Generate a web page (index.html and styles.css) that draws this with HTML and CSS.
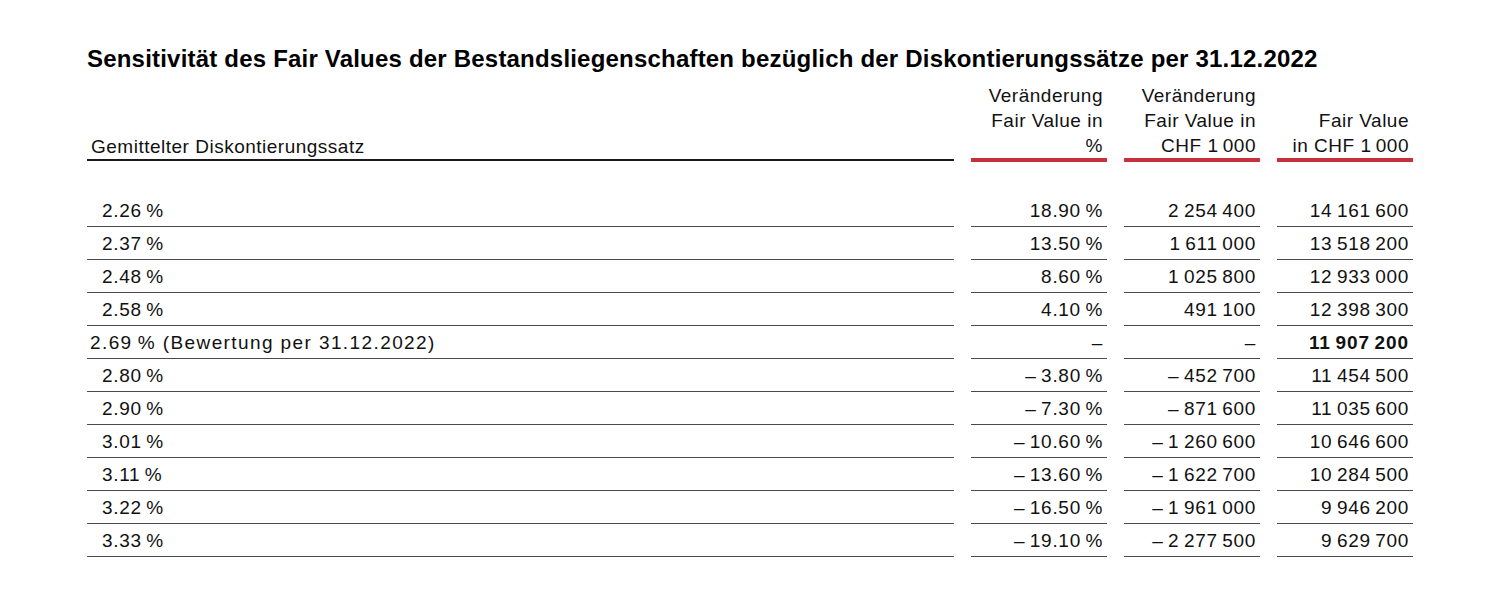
FILE: index.html
```html
<!DOCTYPE html>
<html lang="de">
<head>
<meta charset="utf-8">
<title>Sensitivität</title>
<link rel="stylesheet" href="styles.css">
</head>
<body>
<div class="page">
  <h1 class="title">Sensitivität des Fair Values der Bestandsliegenschaften bezüglich der Diskontierungssätze per 31.12.2022</h1>
  <div class="table">
    <div class="hcell hfirst">Gemittelter Diskontierungssatz</div>
    <div class="hcell hnum"><span>Veränderung<br>Fair Value in<br>%</span></div>
    <div class="hcell hnum"><span>Veränderung<br>Fair Value in<br>CHF 1&#8201;000</span></div>
    <div class="hcell hnum"><span>Fair Value<br>in CHF 1&#8201;000</span></div>

    <div class="spacer"></div><div class="spacer"></div><div class="spacer"></div><div class="spacer"></div>

    <div class="cell label">2.26&#8201;%</div><div class="cell num">18.90&#8201;%</div><div class="cell num">2&#8201;254&#8201;400</div><div class="cell num">14&#8201;161&#8201;600</div>
    <div class="cell label">2.37&#8201;%</div><div class="cell num">13.50&#8201;%</div><div class="cell num">1&#8201;611&#8201;000</div><div class="cell num">13&#8201;518&#8201;200</div>
    <div class="cell label">2.48&#8201;%</div><div class="cell num">8.60&#8201;%</div><div class="cell num">1&#8201;025&#8201;800</div><div class="cell num">12&#8201;933&#8201;000</div>
    <div class="cell label">2.58&#8201;%</div><div class="cell num">4.10&#8201;%</div><div class="cell num">491&#8201;100</div><div class="cell num">12&#8201;398&#8201;300</div>
    <div class="cell label main">2.69&#8201;% (Bewertung per 31.12.2022)</div><div class="cell num">–</div><div class="cell num">–</div><div class="cell num strong">11&#8201;907&#8201;200</div>
    <div class="cell label">2.80&#8201;%</div><div class="cell num">–&#8201;3.80&#8201;%</div><div class="cell num">–&#8201;452&#8201;700</div><div class="cell num">11&#8201;454&#8201;500</div>
    <div class="cell label">2.90&#8201;%</div><div class="cell num">–&#8201;7.30&#8201;%</div><div class="cell num">–&#8201;871&#8201;600</div><div class="cell num">11&#8201;035&#8201;600</div>
    <div class="cell label">3.01&#8201;%</div><div class="cell num">–&#8201;10.60&#8201;%</div><div class="cell num">–&#8201;1&#8201;260&#8201;600</div><div class="cell num">10&#8201;646&#8201;600</div>
    <div class="cell label">3.11&#8201;%</div><div class="cell num">–&#8201;13.60&#8201;%</div><div class="cell num">–&#8201;1&#8201;622&#8201;700</div><div class="cell num">10&#8201;284&#8201;500</div>
    <div class="cell label">3.22&#8201;%</div><div class="cell num">–&#8201;16.50&#8201;%</div><div class="cell num">–&#8201;1&#8201;961&#8201;000</div><div class="cell num">9&#8201;946&#8201;200</div>
    <div class="cell label">3.33&#8201;%</div><div class="cell num">–&#8201;19.10&#8201;%</div><div class="cell num">–&#8201;2&#8201;277&#8201;500</div><div class="cell num">9&#8201;629&#8201;700</div>
  </div>
</div>
</body>
</html>
```

FILE: styles.css
```css
html, body {
  margin: 0;
  padding: 0;
  background: #ffffff;
}
body {
  font-family: "Liberation Sans", Arial, sans-serif;
  color: #111111;
}
.page {
  padding: 45px 0 0 87px;
}
.title {
  margin: 0 0 10px 0;
  font-size: 24px;
  line-height: 28px;
  font-weight: 700;
  letter-spacing: 0.2px;
  color: #000000;
}
.table {
  display: grid;
  grid-template-columns: 867px 136px 136px 136px;
  column-gap: 17px;
  width: 1326px;
}
.hcell {
  font-size: 19px;
  line-height: 25px;
  letter-spacing: 0.5px;
}
.hnum {
  display: flex;
  flex-direction: column;
  justify-content: flex-end;
  text-align: right;
  padding-right: 4px;
  border-bottom: 4px solid #c8303a;
}
.hfirst {
  align-self: end;
  padding-left: 4px;
  border-bottom: 2px solid #1a1a1a;
  margin-bottom: 1px;
}
.spacer {
  height: 32px;
}
.cell {
  height: 32px;
  line-height: 33px;
  font-size: 19px;
  letter-spacing: 0.7px;
  border-bottom: 1px solid #4a4a4a;
  white-space: nowrap;
}
.label {
  padding-left: 15px;
}
.label.main {
  padding-left: 3px;
  letter-spacing: 1.4px;
}
.num {
  text-align: right;
  padding-right: 4px;
}
.strong {
  font-weight: 700;
  letter-spacing: 0.9px;
}
```
